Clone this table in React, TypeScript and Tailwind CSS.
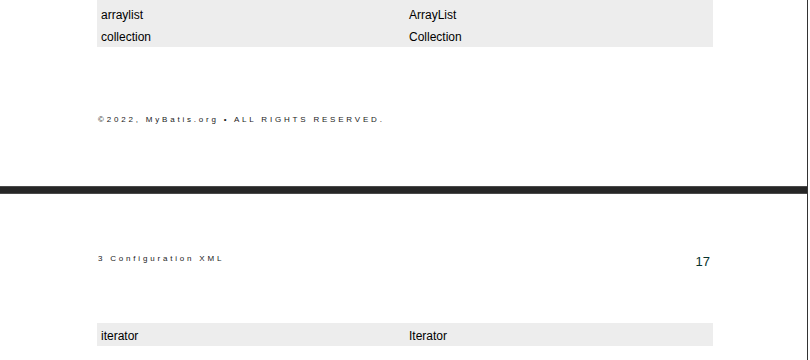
import React from "react";

const font = { fontFamily: '"Liberation Sans", Arial, sans-serif' };

function Row({ a, b, h }: { a: string; b: string; h: string }) {
  return (
    <div className={`flex ${h} items-center pt-[2px] text-[12px] text-black`}>
      <div className="w-[308px] pl-[4px]">{a}</div>
      <div className="w-[308px] pl-[4px]">{b}</div>
    </div>
  );
}

export default function App() {
  return (
    <div className="w-[810px] h-[360px] bg-white overflow-hidden" style={font}>
      <div className="w-[808px] h-[360px] border-r border-[#333333] flex flex-col">
        <div className="ml-[97px] w-[616px] bg-[#ededed] pt-[3px]">
          <Row a="arraylist" b="ArrayList" h="h-[22px]" />
          <Row a="collection" b="Collection" h="h-[22px]" />
        </div>
        <div className="ml-[98px] mt-[67px] h-[12px] leading-[12px] text-[8px] tracking-[2.8px] text-[#1a1a1a] whitespace-nowrap">
          ©2022, MyBatis.org • ALL RIGHTS RESERVED.
        </div>
        <div className="mt-[60px] h-[8px] bg-[#262626] border-y border-[#4a4a4a]" />
        <div className="ml-[97px] w-[616px] mt-[56px] h-[20px] flex items-center justify-between">
          <div className="ml-[1px] mb-[3px] text-[8px] tracking-[2.8px] text-[#1a1a1a] whitespace-nowrap">
            3 Configuration XML
          </div>
          <div className="mr-[3px] mt-[3px] text-[13px] text-[#08332e]">17</div>
        </div>
        <div className="ml-[97px] w-[616px] mt-[53px] bg-[#ededed]">
          <Row a="iterator" b="Iterator" h="h-[23px]" />
        </div>
      </div>
    </div>
  );
}
